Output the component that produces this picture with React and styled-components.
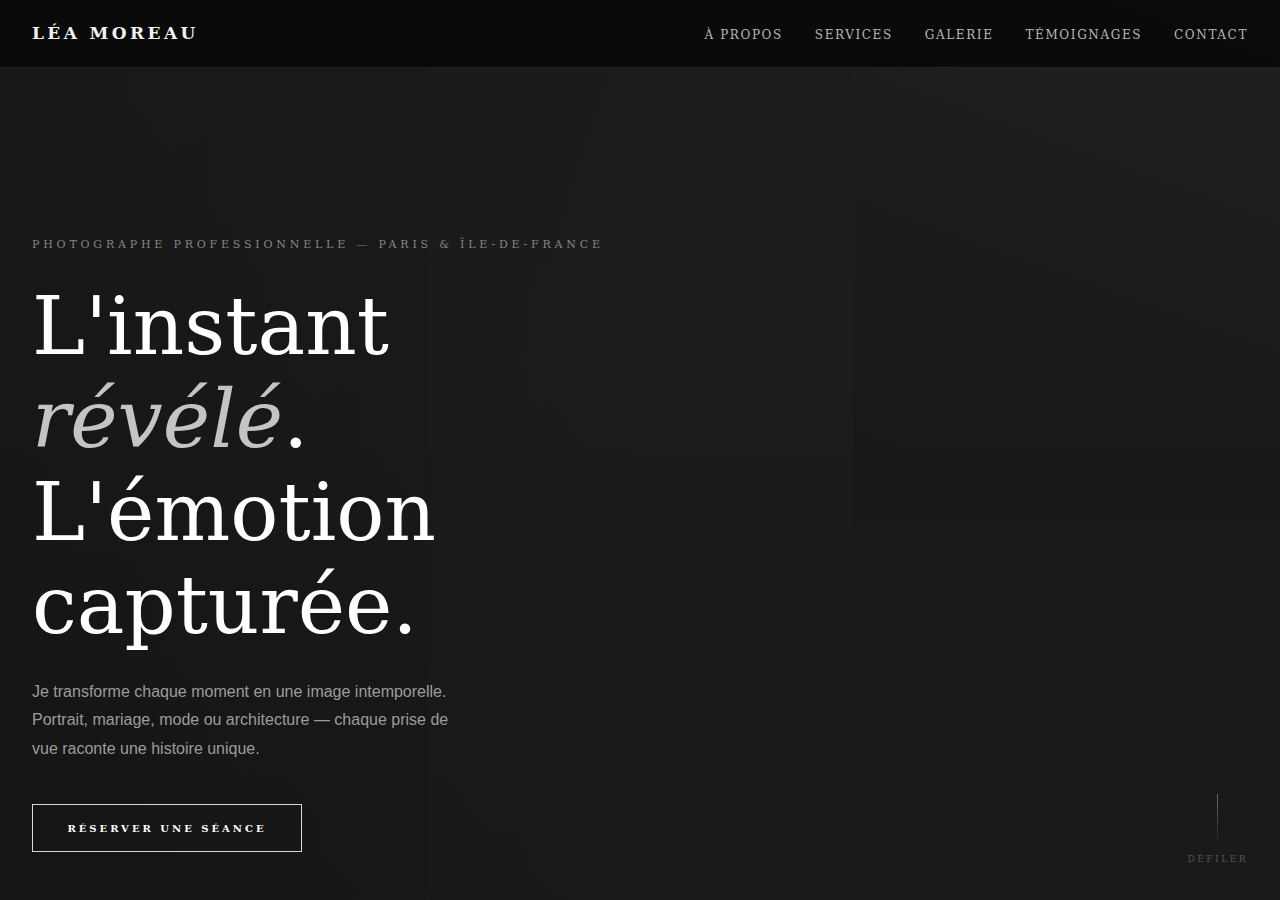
import React from 'react';
import styled, { createGlobalStyle } from 'styled-components';

const GlobalStyle = createGlobalStyle`
  * { box-sizing: border-box; }
  body {
    margin: 0;
    background: #141414;
    font-family: Georgia, "DejaVu Serif", serif;
    -webkit-font-smoothing: antialiased;
  }
`;

const Page = styled.div`
  position: relative;
  min-height: 100vh;
  overflow: hidden;
`;

const Header = styled.header`
  position: absolute;
  top: 0;
  left: 0;
  right: 0;
  z-index: 10;
  height: 68px;
  display: flex;
  align-items: center;
  justify-content: space-between;
  padding: 0 32px;
  background: rgba(10, 10, 10, 0.94);
  border-bottom: 1px solid #1f1f1f;
`;

const Logo = styled.a`
  color: #f2f2f2;
  font-size: 17px;
  font-weight: 600;
  letter-spacing: 3.4px;
  text-decoration: none;
  margin-top: -2px;
`;

const Nav = styled.nav`
  display: flex;
  gap: 32px;
  margin-top: 2px;
`;

const NavLink = styled.a`
  color: #b8b8b8;
  font-size: 12px;
  letter-spacing: 1.6px;
  text-decoration: none;
`;

const Hero = styled.section`
  position: relative;
  min-height: 100vh;
  display: flex;
  flex-direction: column;
  justify-content: flex-end;
  padding: 68px 32px 48px;
`;

const Backdrop = styled.div`
  position: absolute;
  inset: 0;
  display: grid;
  grid-template-columns: repeat(3, 1fr);
  grid-template-rows: repeat(2, 1fr);
  &::after {
    content: '';
    position: absolute;
    inset: 0;
    background: linear-gradient(90deg, rgba(14, 14, 14, 0.3) 0%, rgba(14, 14, 14, 0) 55%);
  }
`;

const Tile = styled.div`
  background: ${(p) => p.$bg};
`;

const Content = styled.div`
  position: relative;
  z-index: 1;
  display: flex;
  flex-direction: column;
  align-items: flex-start;
`;

const Eyebrow = styled.p`
  margin: 0 0 29px;
  color: #858585;
  font-size: 11px;
  letter-spacing: 3.8px;
`;

const Title = styled.h1`
  margin: 0 0 26px;
  color: #ffffff;
  font-size: 80px;
  font-weight: 400;
  line-height: 93px;
  em {
    color: #c4c4c4;
    font-style: italic;
  }
`;

const Lead = styled.p`
  margin: 0 0 40px;
  max-width: 440px;
  color: #9c9c9c;
  font-family: "Liberation Sans", Arial, sans-serif;
  font-size: 16px;
  line-height: 1.8;
`;

const Button = styled.a`
  display: inline-flex;
  align-items: center;
  justify-content: center;
  width: 270px;
  height: 48px;
  border: 1px solid #d8d8d8;
  color: #ffffff;
  font-size: 10px;
  font-weight: 700;
  letter-spacing: 3px;
  text-decoration: none;
`;

const Scroll = styled.div`
  position: absolute;
  right: 32px;
  bottom: 36px;
  z-index: 1;
  display: flex;
  flex-direction: column;
  align-items: center;
  gap: 12px;
`;

const ScrollLine = styled.span`
  width: 1px;
  height: 48px;
  background: linear-gradient(180deg, #6a6a6a, rgba(106, 106, 106, 0.1));
`;

const ScrollLabel = styled.span`
  color: #555;
  font-size: 9px;
  letter-spacing: 2.5px;
`;

const tiles = [
  'linear-gradient(160deg, #1c1c1c 0%, #1a1a1a 100%)',
  'linear-gradient(150deg, #1c1c1c 0%, #1d1d1d 60%, #1c1c1c 100%)',
  'linear-gradient(200deg, #202020 0%, #1d1d1d 45%, #181818 100%)',
  'linear-gradient(180deg, #1a1a1a 0%, #181818 100%)',
  'linear-gradient(180deg, #1b1b1b 0%, #191919 100%)',
  'linear-gradient(180deg, #181818 0%, #1a1a1a 100%)',
];

const links = ['À PROPOS', 'SERVICES', 'GALERIE', 'TÉMOIGNAGES', 'CONTACT'];

export default function App() {
  return (
    <Page>
      <GlobalStyle />
      <Header>
        <Logo href="#">LÉA MOREAU</Logo>
        <Nav>
          {links.map((l) => (
            <NavLink key={l} href="#">
              {l}
            </NavLink>
          ))}
        </Nav>
      </Header>
      <Hero>
        <Backdrop>
          {tiles.map((bg, i) => (
            <Tile key={i} $bg={bg} />
          ))}
        </Backdrop>
        <Content>
          <Eyebrow>PHOTOGRAPHE PROFESSIONNELLE — PARIS &amp; ÎLE-DE-FRANCE</Eyebrow>
          <Title>
            L'instant
            <br />
            <em>révélé</em>.
            <br />
            L'émotion
            <br />
            capturée.
          </Title>
          <Lead>
            Je transforme chaque moment en une image intemporelle. Portrait, mariage, mode ou
            architecture — chaque prise de vue raconte une histoire unique.
          </Lead>
          <Button href="#">RÉSERVER UNE SÉANCE</Button>
        </Content>
        <Scroll>
          <ScrollLine />
          <ScrollLabel>DÉFILER</ScrollLabel>
        </Scroll>
      </Hero>
    </Page>
  );
}
